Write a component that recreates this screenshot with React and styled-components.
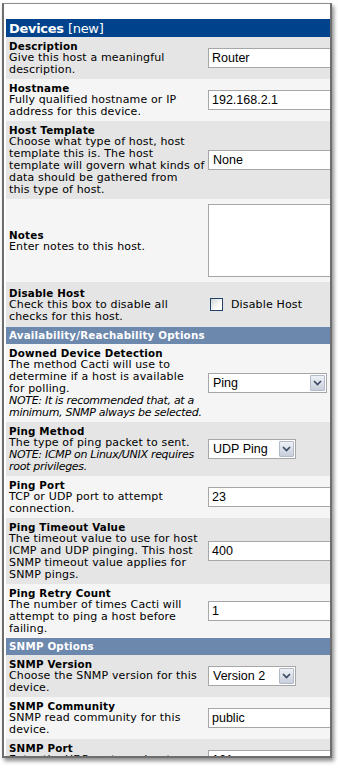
import React from 'react'
import styled, { createGlobalStyle } from 'styled-components'

const GlobalStyle = createGlobalStyle`
  html, body {
    margin: 0;
    padding: 0;
    background: #fff;
  }
  body {
    width: 338px;
    height: 768px;
    overflow: hidden;
    font-family: "DejaVu Sans", Verdana, sans-serif;
  }
`

const Frame = styled.div`
  box-sizing: border-box;
  width: 330px;
  height: 755px;
  margin: 3px 0 0 2px;
  padding: 15px 0 0 2px;
  border: 2px solid #6e6e6e;
  border-top: 1px solid #8a8a8a;
  box-shadow: 2px 3px 4px rgba(0, 0, 0, .45);
  background: #fff;
  overflow: hidden;
`

const TitleBar = styled.div`
  height: 18px;
  line-height: 19px;
  padding: 0 3px;
  background: #00438c;
  color: #fff;
  font-size: 13px;
  font-weight: bold;
  letter-spacing: -.3px;
  white-space: nowrap;

  span {
    font-weight: normal;
  }
`

const SectionBar = styled.div`
  height: 17px;
  line-height: 17px;
  padding: 0 3px;
  background: #6d88ad;
  color: #fff;
  font-size: 10.3px;
  font-weight: bold;
  letter-spacing: .2px;
  white-space: nowrap;
`

const Row = styled.div`
  display: grid;
  grid-template-columns: 202px minmax(0, 1fr);
  align-items: center;
  min-height: ${ p => p.$minHeight || 0 }px;
  background: ${ p => p.$alt ? '#f5f5f5' : '#e5e5e5' };
`

const Label = styled.div`
  padding: 3px 0 3px 3px;
  color: #000;
  font-size: 11px;
  line-height: 12px;
  letter-spacing: .15px;
`

const Title = styled.div`
  font-size: 10.3px;
  font-weight: bold;
  letter-spacing: .2px;
`

const Line = styled.div`
  white-space: nowrap;
  font-style: ${ p => p.$note ? 'italic' : 'normal' };
  letter-spacing: ${ p => p.$note ? '-.3px' : 'inherit' };
`

const Field = styled.div`
  display: flex;
  align-items: center;
  white-space: nowrap;
`

const TextInput = styled.input`
  flex: none;
  box-sizing: border-box;
  width: 200px;
  height: 20px;
  padding: 0 3px;
  border: 1px solid #a7a7a7;
  background: #fff;
  color: #000;
  font: 12.5px "Liberation Sans", Arial, sans-serif;
  outline: none;
`

const NotesArea = styled.textarea`
  flex: none;
  box-sizing: border-box;
  width: 200px;
  height: 73px;
  margin: 5px 0;
  border: 1px solid #a7a7a7;
  background: #fff;
  resize: none;
  outline: none;
`

const SelectBox = styled.div`
  flex: none;
  display: flex;
  align-items: center;
  box-sizing: border-box;
  width: ${ p => p.$width }px;
  height: 20px;
  padding: 1px;
  border: 1px solid #a7a7a7;
  background: #fff;
`

const SelectValue = styled.select`
  flex: 1;
  min-width: 0;
  height: 100%;
  padding: 0 0 0 3px;
  border: 0;
  background: transparent;
  color: #000;
  font: 12.5px "Liberation Sans", Arial, sans-serif;
  appearance: none;
  outline: none;
`

const SelectButton = styled.span`
  flex: none;
  display: flex;
  align-items: center;
  justify-content: center;
  box-sizing: border-box;
  width: 15px;
  height: 16px;
  border: 1px solid #b3bac8;
  border-radius: 1px;
  background: linear-gradient(#eef1f6, #c8cfdb);
`

const CheckBox = styled.input`
  flex: none;
  box-sizing: border-box;
  width: 13px;
  height: 13px;
  margin: 0 0 0 2px;
  border: 1px solid #1f4468;
  background: linear-gradient(135deg, #d6d6d6, #fff 70%);
  appearance: none;
`

const CheckLabel = styled.label`
  margin-left: 8px;
  color: #000;
  font-size: 11px;
  letter-spacing: .15px;
`

const Chevron = () => (
  <svg width="9" height="6" viewBox="0 0 9 6">
    <path d="M1 1 L4.5 4.5 L8 1" fill="none" stroke="#3c4a66" strokeWidth="1.7" />
  </svg>
)

const Select = ({ value, width }) => (
  <SelectBox $width={ width }>
    <SelectValue defaultValue={ value }>
      <option>{ value }</option>
    </SelectValue>
    { width < 200 && <SelectButton><Chevron /></SelectButton> }
  </SelectBox>
)

const sections = [
  {
    title: null,
    fields: [
      {
        title: 'Description',
        lines: ['Give this host a meaningful', 'description.'],
        kind: 'text', value: 'Router',
      },
      {
        title: 'Hostname',
        lines: ['Fully qualified hostname or IP', 'address for this device.'],
        kind: 'text', value: '192.168.2.1',
      },
      {
        title: 'Host Template',
        lines: ['Choose what type of host, host', 'template this is. The host', 'template will govern what kinds of', 'data should be gathered from', 'this type of host.'],
        kind: 'select', value: 'None', width: 260,
      },
      {
        title: 'Notes',
        lines: ['Enter notes to this host.'],
        kind: 'notes',
      },
      {
        title: 'Disable Host',
        lines: ['Check this box to disable all', 'checks for this host.'],
        kind: 'check', value: 'Disable Host', minHeight: 45,
      },
    ],
  },
  {
    title: 'Availability/Reachability Options',
    fields: [
      {
        title: 'Downed Device Detection',
        lines: ['The method Cacti will use to', 'determine if a host is available', 'for polling.'],
        note: ['NOTE: It is recommended that, at a', 'minimum, SNMP always be selected.'],
        kind: 'select', value: 'Ping', width: 119,
      },
      {
        title: 'Ping Method',
        lines: ['The type of ping packet to sent.'],
        note: ['NOTE: ICMP on Linux/UNIX requires', 'root privileges.'],
        kind: 'select', value: 'UDP Ping', width: 88,
      },
      {
        title: 'Ping Port',
        lines: ['TCP or UDP port to attempt', 'connection.'],
        kind: 'text', value: '23',
      },
      {
        title: 'Ping Timeout Value',
        lines: ['The timeout value to use for host', 'ICMP and UDP pinging. This host', 'SNMP timeout value applies for', 'SNMP pings.'],
        kind: 'text', value: '400',
      },
      {
        title: 'Ping Retry Count',
        lines: ['The number of times Cacti will', 'attempt to ping a host before', 'failing.'],
        kind: 'text', value: '1',
      },
    ],
  },
  {
    title: 'SNMP Options',
    fields: [
      {
        title: 'SNMP Version',
        lines: ['Choose the SNMP version for this', 'device.'],
        kind: 'select', value: 'Version 2', width: 88,
      },
      {
        title: 'SNMP Community',
        lines: ['SNMP read community for this', 'device.'],
        kind: 'text', value: 'public',
      },
      {
        title: 'SNMP Port',
        lines: ['Enter the UDP port number to use', 'for SNMP (default is 161).'],
        kind: 'text', value: '161',
      },
    ],
  },
]

const Control = ({ field }) => {
  switch (field.kind) {
    case 'select':
      return <Select value={ field.value } width={ field.width } />
    case 'notes':
      return <NotesArea />
    case 'check':
      return (
        <>
          <CheckBox type="checkbox" id="disabled" />
          <CheckLabel htmlFor="disabled">{ field.value }</CheckLabel>
        </>
      )
    default:
      return <TextInput type="text" defaultValue={ field.value } />
  }
}

export default function App() {
  let index = 0
  return (
    <>
      <GlobalStyle />
      <Frame>
        <TitleBar>Devices <span>[new]</span></TitleBar>
        { sections.map((section, s) => (
          <React.Fragment key={ s }>
            { section.title && <SectionBar>{ section.title }</SectionBar> }
            { section.fields.map(field => {
              const alt = index++ % 2 === 1
              return (
                <Row key={ field.title } $alt={ alt } $minHeight={ field.minHeight }>
                  <Label>
                    <Title>{ field.title }</Title>
                    { field.lines.map(line => <Line key={ line }>{ line }</Line>) }
                    { field.note && field.note.map(line => <Line key={ line } $note>{ line }</Line>) }
                  </Label>
                  <Field>
                    <Control field={ field } />
                  </Field>
                </Row>
              )
            }) }
          </React.Fragment>
        )) }
      </Frame>
    </>
  )
}
